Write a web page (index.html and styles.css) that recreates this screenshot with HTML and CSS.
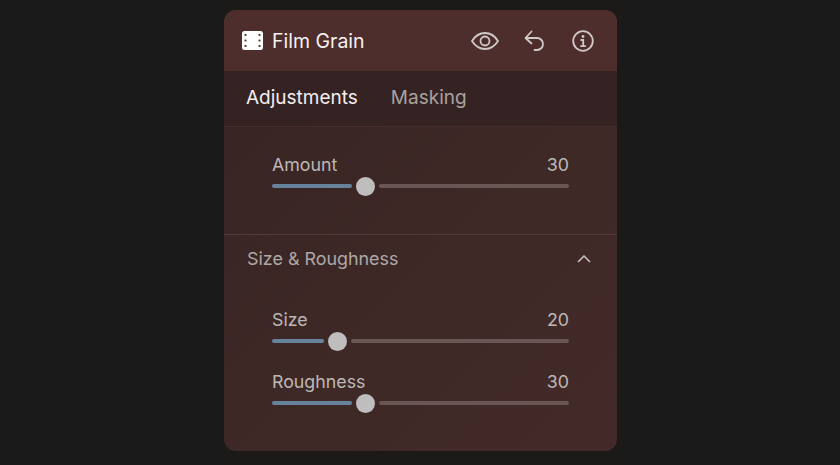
FILE: index.html
```html
<!DOCTYPE html>
<html lang="en">
<head>
  <meta charset="UTF-8" />
  <title>Film Grain</title>
  <link rel="stylesheet" href="styles.css">
</head>
<body>
  <div class="column">
    <div class="panel">
      <div class="panel-header">
        <svg class="film-icon" width="21" height="19" viewBox="0 0 21 19">
          <rect width="21" height="19" rx="2.500" fill="#fff"/>
          <g fill="#5a3a3a">
            <rect x="2.500" y="3" width="2" height="2" rx=".5"/>
            <rect x="2.500" y="8.500" width="2" height="2" rx=".5"/>
            <rect x="2.500" y="14" width="2" height="2" rx=".5"/>
            <rect x="16.500" y="3" width="2" height="2" rx=".5"/>
            <rect x="16.500" y="8.500" width="2" height="2" rx=".5"/>
            <rect x="16.500" y="14" width="2" height="2" rx=".5"/>
          </g>
        </svg>
        <span class="panel-title">Film Grain</span>
        <div class="header-icons">
          <svg width="28" height="18" viewBox="0 0 28 18" fill="none" stroke="#cfcac8" stroke-width="1.800">
            <path d="M1 9C4.500 3.500 9 1 14 1s9.500 2.500 13 8c-3.500 5.500-8 8-13 8S4.500 14.500 1 9z"/>
            <circle cx="14" cy="9" r="4.500"/>
          </svg>
          <svg class="undo-icon" width="21" height="22" viewBox="0 0 21 22" fill="none" stroke="#cfcac8" stroke-width="1.800" stroke-linecap="round" stroke-linejoin="round">
            <path d="M7.500 1.500 1.500 8l6 5.500"/>
            <path d="M2 8h11a5.800 5.800 0 0 1 0 12h-2.500"/>
          </svg>
          <svg width="22" height="22" viewBox="0 0 22 22" fill="none" stroke="#cfcac8" stroke-width="1.800">
            <circle cx="11" cy="11" r="9.800"/>
            <circle cx="11" cy="6.500" r="1.400" fill="#cfcac8" stroke="none"/>
            <path d="M8.500 10H11.200V16M8.300 16.200h5.600"/>
          </svg>
        </div>
      </div>

      <div class="tabs">
        <span class="tab active">Adjustments</span>
        <span class="tab">Masking</span>
      </div>

      <div class="section first-section">
        <div class="slider-row">
          <div class="slider-label"><span>Amount</span><span>30</span></div>
          <div class="slider">
            <div class="fill" style="width: 80px"></div>
            <div class="thumb"></div>
            <div class="rest"></div>
          </div>
        </div>
      </div>

      <div class="section-head">
        <span>Size &amp; Roughness</span>
        <svg width="14" height="9" viewBox="0 0 14 9" fill="none" stroke="#c4bfbd" stroke-width="1.700" stroke-linecap="round" stroke-linejoin="round">
          <path d="M1.500 7.500 7 2l5.500 5.500"/>
        </svg>
      </div>

      <div class="section">
        <div class="slider-row">
          <div class="slider-label"><span>Size</span><span>20</span></div>
          <div class="slider">
            <div class="fill" style="width: 52px"></div>
            <div class="thumb"></div>
            <div class="rest"></div>
          </div>
        </div>
        <div class="slider-row">
          <div class="slider-label"><span>Roughness</span><span>30</span></div>
          <div class="slider">
            <div class="fill" style="width: 80px"></div>
            <div class="thumb"></div>
            <div class="rest"></div>
          </div>
        </div>
      </div>
    </div>
  </div>
</body>
</html>
```

FILE: styles.css
```css
* { box-sizing: border-box; margin: 0; padding: 0; font-family: Inter, 'Liberation Sans', sans-serif; }

html, body { height: 100%; }

body {
  background: #1a1a1a;
  display: flex;
  justify-content: center;
  overflow: hidden;
}

.column {
  width: 410px;
  height: 465px;
  padding: 10px 8px 14px 9px;
  background: #1c1a19;
}

.panel {
  height: 441px;
  border-radius: 12px;
  overflow: hidden;
  background: linear-gradient(135deg, #372322 0%, #3e2927 60%, #432a29 100%);
}

.panel-header {
  height: 61px;
  background: #4e2d2d;
  display: flex;
  align-items: center;
  padding: 0 23px 0 18px;
}

.film-icon { margin-right: 9px; }

.panel-title { font-size: 19.500px; font-weight: 400; color: #f5f2f1; }

.header-icons {
  margin-left: auto;
  display: flex;
  align-items: center;
  gap: 26px;
}

.undo-icon { margin-left: -1px; margin-right: 1px; }

.tabs {
  height: 56px;
  display: flex;
  align-items: center;
  gap: 33px;
  padding: 0 22px 2px;
  background: #352222;
  border-bottom: 1px solid #432e2d;
}

.tab { font-size: 19px; color: #a8a2a0; }
.tab.active { color: #f2efee; }

.section { padding: 0 48px; }
.first-section { height: 107px; padding-top: 27px; }

.section-head {
  height: 48px;
  display: flex;
  align-items: center;
  justify-content: space-between;
  padding: 0 26px 0 23px;
  font-size: 17.900px;
  color: #aea8a6;
  border-top: 1px solid #523b3a;
}

.slider-row { height: 62px; }
.section-head + .section { padding-top: 27px; }

.slider-label {
  display: flex;
  justify-content: space-between;
  font-size: 17.800px;
  line-height: 22px;
  color: #bdb8b6;
}

.slider {
  display: flex;
  align-items: center;
  gap: 3px;
  height: 20px;
}

.fill { height: 4px; background: #67829c; border-radius: 2px; }

.thumb {
  width: 19px;
  height: 19px;
  border-radius: 50%;
  background: #bfbebe;
  margin: 0 1px;
}

.rest { flex: 1; height: 4px; background: #6a5654; border-radius: 2px; }
```
